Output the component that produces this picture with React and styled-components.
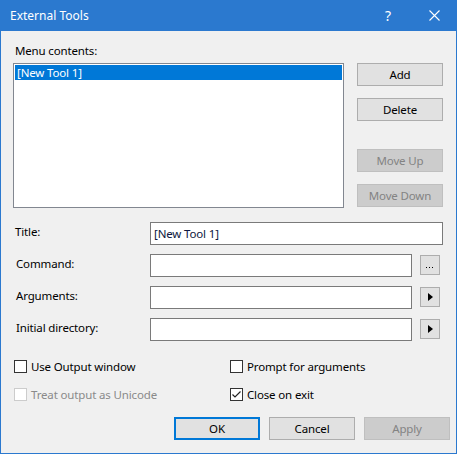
import React from "react";
import styled, { createGlobalStyle } from "styled-components";

const Global = createGlobalStyle`
  html, body { margin: 0; padding: 0; background: #f0f0f0; }
  body {
    font-family: "Noto Sans", "Open Sans", sans-serif;
    font-size: 11.5px;
    letter-spacing: -0.15px;
    color: #000;
  }
`;

const Window = styled.div`
  width: 457px;
  height: 454px;
  box-sizing: border-box;
  border: 1px solid #2b79cf;
  border-top: none;
  background: #f0f0f0;
  display: flex;
  flex-direction: column;
  overflow: hidden;
`;

const TitleBar = styled.div`
  height: 31px;
  margin: 0 -1px;
  background: #2b79cf;
  color: #fff;
  display: flex;
  align-items: center;
  padding-left: 10px;
  font-size: 12px;
  letter-spacing: 0;
`;

const TitleText = styled.div`
  flex: 1;
`;

const CaptionButton = styled.div`
  width: 46px;
  height: 31px;
  display: flex;
  align-items: center;
  justify-content: center;
  font-size: 14px;
`;

const Body = styled.div`
  flex: 1;
  padding: 11px 6px 0 12px;
  display: flex;
  flex-direction: column;
`;

const Top = styled.div`
  display: flex;
  gap: 13px;
`;

const ListColumn = styled.div`
  display: flex;
  flex-direction: column;
  width: 331px;
`;

const Label = styled.div`
  height: 17px;
  line-height: 17px;
  padding-left: 2px;
  white-space: nowrap;
`;

const ListBox = styled.div`
  margin-top: 4px;
  height: 145px;
  box-sizing: border-box;
  border: 1px solid #828790;
  background: #fff;
  padding: 1px;
`;

const ListItem = styled.div`
  height: 15px;
  line-height: 15px;
  padding-left: 2px;
  background: #0078d7;
  color: #fff;
`;

const ButtonColumn = styled.div`
  display: flex;
  flex-direction: column;
  padding-top: 21px;
  gap: 12px;
`;

const Button = styled.div`
  width: 86px;
  height: 23px;
  box-sizing: border-box;
  display: flex;
  align-items: center;
  justify-content: center;
  background: ${(p) => (p.$disabled ? "#cccccc" : "#e1e1e1")};
  border: ${(p) => (p.$default ? "2px solid #0078d7" : p.$disabled ? "1px solid #bfbfbf" : "1px solid #adadad")};
  color: ${(p) => (p.$disabled ? "#838383" : "#000")};
  margin-top: ${(p) => p.$gapTop || 0}px;
`;

const Form = styled.div`
  margin-top: 14px;
  display: grid;
  grid-template-columns: 137px 262px 28px;
  row-gap: 9px;
  align-items: start;
`;

const FieldLabel = styled.div`
  padding-top: 2px;
  padding-left: ${(p) => p.$indent || 2}px;
  line-height: 16px;
`;

const Input = styled.div`
  height: 23px;
  box-sizing: border-box;
  border: 1px solid #7a7a7a;
  background: #fff;
  padding-left: 3px;
  line-height: 21px;
  color: #0c1740;
  grid-column: ${(p) => (p.$wide ? "2 / 4" : "auto")};
  width: ${(p) => (p.$wide ? "293px" : "auto")};
`;

const SmallButton = styled.div`
  width: 20px;
  height: 20px;
  margin: 1px 0 0 8px;
  box-sizing: border-box;
  border: 1px solid #adadad;
  background: #e1e1e1;
  display: flex;
  align-items: center;
  justify-content: center;
`;

const Checks = styled.div`
  margin-top: 17px;
  display: grid;
  grid-template-columns: 216px 1fr;
  row-gap: 11px;
  padding-left: 1px;
`;

const CheckRow = styled.div`
  display: flex;
  align-items: center;
  gap: 4px;
  height: 17px;
  color: ${(p) => (p.$disabled ? "#8a8a8a" : "#000")};
`;

const Box = styled.div`
  width: 13px;
  height: 13px;
  box-sizing: border-box;
  border: 1px solid ${(p) => (p.$disabled ? "#cccccc" : "#333")};
  background: #fff;
  display: flex;
  align-items: center;
  justify-content: center;
`;

const Footer = styled.div`
  margin-top: 14px;
  display: flex;
  justify-content: flex-end;
  gap: 9px;
`;

const Arrow = () => (
  <svg width="5" height="8" viewBox="0 0 5 8">
    <path d="M0 0 L5 4 L0 8 Z" fill="#000" />
  </svg>
);

const Dots = () => (
  <svg width="10" height="10" viewBox="0 0 10 10">
    <rect x="1" y="7" width="1" height="1" fill="#000" />
    <rect x="4" y="7" width="1" height="1" fill="#000" />
    <rect x="7" y="7" width="1" height="1" fill="#000" />
  </svg>
);

const Check = ({ checked, disabled }) => (
  <Box $disabled={disabled}>
    {checked && (
      <svg width="11" height="11" viewBox="0 0 11 11">
        <path d="M1.5 5.5 L4 8 L9.5 2.5" stroke="#222" strokeWidth="1.2" fill="none" />
      </svg>
    )}
  </Box>
);

export default function App() {
  return (
    <>
      <Global />
      <Window>
        <TitleBar>
          <TitleText>External Tools</TitleText>
          <CaptionButton>?</CaptionButton>
          <CaptionButton>
            <svg width="11" height="11" viewBox="0 0 11 11">
              <path d="M0.5 0.5 L10.5 10.5 M10.5 0.5 L0.5 10.5" stroke="#fff" strokeWidth="1.1" />
            </svg>
          </CaptionButton>
        </TitleBar>
        <Body>
          <Top>
            <ListColumn>
              <Label>Menu contents:</Label>
              <ListBox>
                <ListItem>[New Tool 1]</ListItem>
              </ListBox>
            </ListColumn>
            <ButtonColumn>
              <Button>Add</Button>
              <Button>Delete</Button>
              <Button $disabled $gapTop={16}>Move Up</Button>
              <Button $disabled>Move Down</Button>
            </ButtonColumn>
          </Top>
          <Form>
            <FieldLabel $indent={2}>Title:</FieldLabel>
            <Input $wide>[New Tool 1]</Input>
            <FieldLabel $indent={3}>Command:</FieldLabel>
            <Input />
            <SmallButton><Dots /></SmallButton>
            <FieldLabel $indent={3}>Arguments:</FieldLabel>
            <Input />
            <SmallButton><Arrow /></SmallButton>
            <FieldLabel $indent={3}>Initial directory:</FieldLabel>
            <Input />
            <SmallButton><Arrow /></SmallButton>
          </Form>
          <Checks>
            <CheckRow><Check />Use Output window</CheckRow>
            <CheckRow><Check />Prompt for arguments</CheckRow>
            <CheckRow $disabled><Check disabled />Treat output as Unicode</CheckRow>
            <CheckRow><Check checked />Close on exit</CheckRow>
          </Checks>
          <Footer>
            <Button $default>OK</Button>
            <Button>Cancel</Button>
            <Button $disabled>Apply</Button>
          </Footer>
        </Body>
      </Window>
    </>
  );
}
